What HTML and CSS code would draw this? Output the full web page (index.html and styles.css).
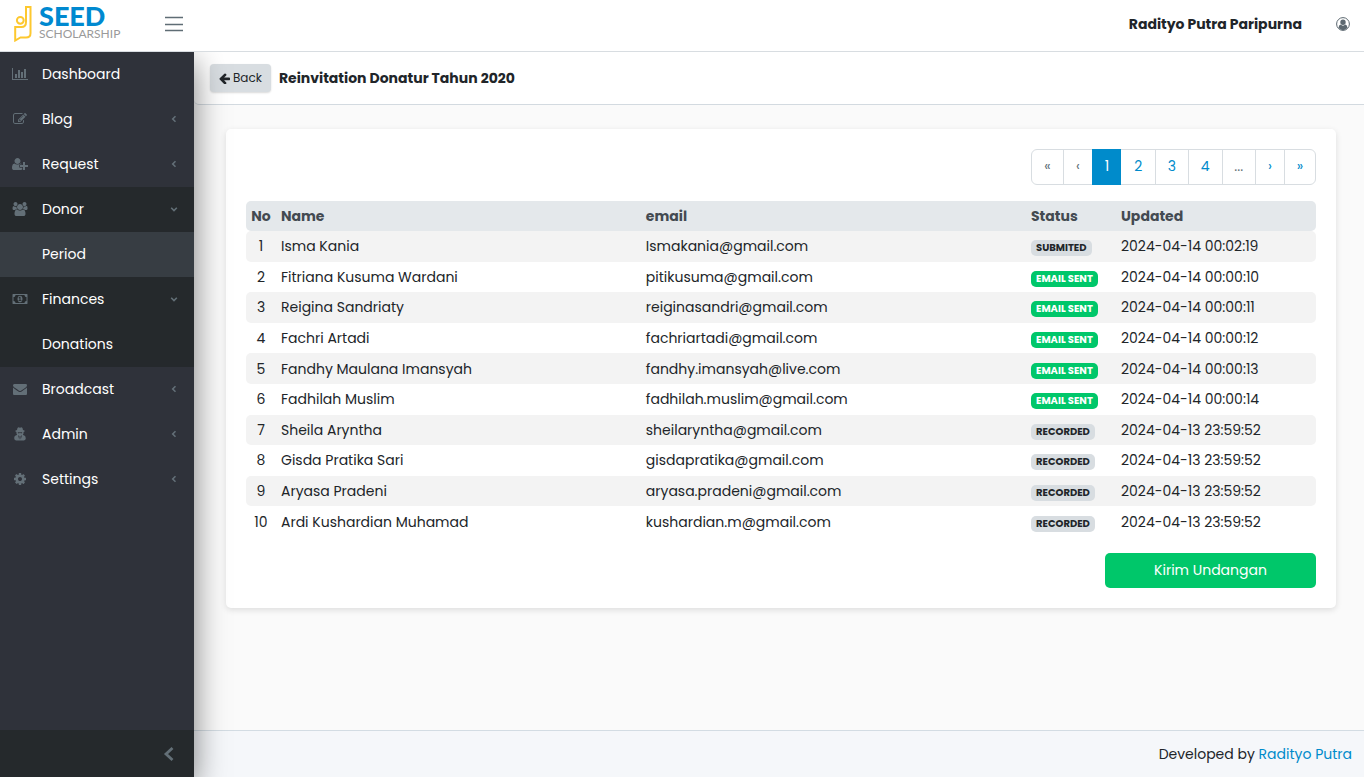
FILE: index.html
```html
<!DOCTYPE html>
<html lang="en">
<head>
<meta charset="utf-8">
<title>Reinvitation Donatur Tahun 2020</title>
<link rel="stylesheet" href="styles.css">
</head>
<body>
<header class="topbar">
  <a class="brand" href="#">
    <svg class="brand-mark" viewBox="0 0 18 36" aria-hidden="true"><path d="M12 1H16.500V27.200Q16.500 31.500 12 31.500H6.500L1.200 34.500V21H7.500Q12 21 12 16Z"/><circle cx="6.300" cy="14.300" r="3.400"/></svg>
    <span class="brand-text"><span class="brand-name">SEED</span><span class="brand-sub">SCHOLARSHIP</span></span>
  </a>
  <button class="menu-toggle" type="button" aria-label="Toggle menu"><svg viewBox="0 0 18 16"><path d="M0 1.500H18M0 8.500H18M0 14.500H18"/></svg></button>
  <strong class="user-name">Radityo Putra Paripurna</strong>
  <button class="user-button" type="button" aria-label="Account"><svg viewBox="0 0 14 14"><circle class="ring" cx="7" cy="7" r="6.400"/><path d="M7 2.600A2.700 2.700 0 0 1 7 8A2.700 2.700 0 0 1 7 2.600M4.600 7.500Q7 9.800 9.400 7.500Q11.200 8 11.500 10.800Q9.800 13.200 7 13.200T2.500 10.800Q2.800 8 4.600 7.500"/></svg></button>
</header>
<div class="shell">
  <aside class="sidebar">
    <nav class="nav">
      <a class="nav-item" href="#"><svg class="icon" viewBox="0 0 2048 1792"><path d="M640 896v512h-256v-512h256zm384-512v1024h-256v-1024h256zm1024 1152v128h-2048v-1536h128v1408h1920zm-640-896v768h-256v-768h256zm384-384v1152h-256v-1152h256z"/></svg><span>Dashboard</span></a>
      <a class="nav-item" href="#"><svg class="icon" viewBox="0 0 1792 1792"><path d="M888 1184l116-116-152-152-116 116v56h96v96h56zm440-720q-16-16-33 1l-350 350q-17 17-1 33t33-1l350-350q17-17 1-33zm80 594v190q0 119-84.5 203.5t-203.5 84.5h-832q-119 0-203.5-84.5t-84.5-203.5v-832q0-119 84.5-203.5t203.5-84.5h832q63 0 117 25 15 7 18 23 3 17-9 29l-49 49q-14 14-32 8-23-6-45-6h-832q-66 0-113 47t-47 113v832q0 66 47 113t113 47h832q66 0 113-47t47-113v-126q0-13 9-22l64-64q15-15 35-7t20 29zm-96-738l288 288-672 672h-288v-288zm444 132l-92 92-288-288 92-92q28-28 68-28t68 28l152 152q28 28 28 68t-28 68z"/></svg><span>Blog</span><svg class="caret" viewBox="0 0 8 8"><path d="M5.5 1.2L2.7 4L5.5 6.8"/></svg></a>
      <a class="nav-item" href="#"><svg class="icon" viewBox="0 0 2048 1792"><path d="M704 896q-159 0-271.5-112.5t-112.5-271.5 112.5-271.5 271.5-112.5 271.5 112.5 112.5 271.5-112.5 271.5-271.5 112.5zm960 128h352q13 0 22.5 9.5t9.5 22.5v192q0 13-9.5 22.5t-22.5 9.5h-352v352q0 13-9.5 22.5t-22.5 9.5h-192q-13 0-22.5-9.5t-9.5-22.5v-352h-352q-13 0-22.5-9.5t-9.5-22.5v-192q0-13 9.5-22.5t22.5-9.5h352v-352q0-13 9.5-22.5t22.5-9.5h192q13 0 22.5 9.5t9.5 22.5v352zm-736 224q0 52 38 90t90 38h256v238q-68 50-171 50h-874q-121 0-194-69t-73-190q0-53 3.5-103.5t14-109 26.5-108.5 43-97.5 62-81 85.5-53.5 111.5-20q19 0 39 17 79 61 154.5 91.5t164.5 30.5 164.5-30.5 154.5-91.5q20-17 39-17 132 0 217 96h-223q-52 0-90 38t-38 90v192z"/></svg><span>Request</span><svg class="caret" viewBox="0 0 8 8"><path d="M5.5 1.2L2.7 4L5.5 6.8"/></svg></a>
      <div class="nav-group">
        <a class="nav-item" href="#"><svg class="icon" viewBox="0 0 1920 1792"><path d="M593 896q-162 5-265 128h-134q-82 0-138-40.5t-56-118.5q0-353 124-353 6 0 43.5 21t97.5 42.5 119 21.5q67 0 133-23-5 37-5 66 0 159 93 293zm1071 637q0 120-73 189.5t-194 69.5h-874q-121 0-194-69.5t-73-189.5q0-53 3.5-103.5t14-109 26.5-108.5 43-97.5 62-81 85.5-53.5 111.5-20q10 0 43 21.5t73 48 107 48 135 21.5 135-21.5 107-48 73-48 43-21.5q61 0 111.5 20t85.5 53.5 62 81 43 97.5 26.5 108.5 14 109 3.5 103.5zm-1024-1277q0 106-75 181t-181 75-181-75-75-181 75-181 181-75 181 75 75 181zm704 384q0 159-112.5 271.5t-271.5 112.5-271.5-112.5-112.5-271.5 112.5-271.5 271.5-112.5 271.5 112.5 112.5 271.5zm576 225q0 78-56 118.5t-138 40.5h-134q-103-123-265-128 93-134 93-293 0-29-5-66 66 23 133 23 59 0 119-21.5t97.5-42.5 43.5-21q124 0 124 353zm-128-609q0 106-75 181t-181 75-181-75-75-181 75-181 181-75 181 75 75 181z"/></svg><span>Donor</span><svg class="caret" viewBox="0 0 8 8"><path d="M1.2 2.7L4 5.5L6.8 2.7"/></svg></a>
        <a class="nav-item nav-child current" href="#">Period</a>
        <a class="nav-item" href="#"><svg class="icon" viewBox="0 0 1920 1792"><path d="M768 1152h384v-96h-128v-448h-114l-148 137 77 80q42-37 55-57h2v288h-128v96zm512-256q0 70-21 142t-59.5 134-101.5 101-138 39-138-39-101.5-101-59.5-134-21-142 21-142 59.5-134 101.5-101 138-39 138 39 101.5 101 59.5 134 21 142zm512 256v-512q-106 0-181-75t-75-181h-1152q0 106-75 181t-181 75v512q106 0 181 75t75 181h1152q0-106 75-181t181-75zm128-832v1152q0 26-19 45t-45 19h-1792q-26 0-45-19t-19-45v-1152q0-26 19-45t45-19h1792q26 0 45 19t19 45z"/></svg><span>Finances</span><svg class="caret" viewBox="0 0 8 8"><path d="M1.2 2.7L4 5.5L6.8 2.7"/></svg></a>
        <a class="nav-item nav-child" href="#">Donations</a>
      </div>
      <a class="nav-item" href="#"><svg class="icon" viewBox="0 0 1792 1792"><path d="M1792 710v794q0 66-47 113t-113 47h-1472q-66 0-113-47t-47-113v-794q44 49 101 87 362 246 497 345 57 42 92.5 65.5t94.5 48 110 24.5h2q51 0 110-24.5t94.5-48 92.5-65.5q170-123 498-345 57-39 100-87zm0-294q0 79-49 151t-122 123q-376 261-468 325-10 7-42.5 31t-54 38.5-52 32.5-57.5 27-50 9h-2q-23 0-50-9t-57.5-27-52-32.5-54-38.5-42.5-31q-91-64-262-182.5t-205-142.5q-62-42-117-115.5t-55-136.5q0-78 41.5-130t118.5-52h1472q65 0 112.5 47t47.5 113z"/></svg><span>Broadcast</span><svg class="caret" viewBox="0 0 8 8"><path d="M5.5 1.2L2.7 4L5.5 6.8"/></svg></a>
      <a class="nav-item" href="#"><svg class="icon" viewBox="0 0 14 14"><path fill-rule="evenodd" d="M4 3Q4.300.3 5.400.3Q6.200.3 7 .8Q7.800.3 8.600.3Q9.700.3 10 3Q11.800 3.400 11.800 4T10.600 5Q10.800 6.500 10 7.500L10.200 8Q12.800 8.500 12.800 11.300Q12.800 13.400 11 13.400H3Q1.200 13.400 1.200 11.300Q1.200 8.500 3.800 8L4 7.500Q3.200 6.500 3.400 5Q2.200 4.600 2.200 4T4 3ZM4.700 5.300Q4.800 6.400 5.800 6.400T7 5.600Q7.200 6.400 8.200 6.400T9.300 5.300ZM5.100 8.300L6.200 12.600L6.600 9.800L6 8.700ZM8.900 8.300L7.800 12.600L7.400 9.800L8 8.700Z"/></svg><span>Admin</span><svg class="caret" viewBox="0 0 8 8"><path d="M5.5 1.2L2.7 4L5.5 6.8"/></svg></a>
      <a class="nav-item" href="#"><svg class="icon" viewBox="0 0 1792 1792"><path d="M1152 896q0-106-75-181t-181-75-181 75-75 181 75 181 181 75 181-75 75-181zm512-109v222q0 12-8 23t-20 13l-185 28q-19 54-39 91 35 50 107 138 10 12 10 25t-9 23q-27 37-99 108t-94 71q-12 0-26-9l-138-108q-44 23-91 38-16 136-29 186-7 28-36 28h-222q-14 0-24.5-8.5t-11.5-21.5l-28-184q-49-16-90-37l-141 107q-10 9-25 9-14 0-25-11-126-114-165-168-7-10-7-23 0-12 8-23 15-21 51-66.5t54-70.5q-27-50-41-99l-183-27q-13-2-21-12.5t-8-23.5v-222q0-12 8-23t19-13l186-28q14-46 39-92-40-57-107-138-10-12-10-24 0-10 9-23 26-36 98.5-107.5t94.5-71.5q13 0 26 10l138 107q44-23 91-38 16-136 29-186 7-28 36-28h222q14 0 24.5 8.5t11.5 21.5l28 184q49 16 90 37l142-107q9-9 24-9 13 0 25 10 129 119 165 170 7 8 7 22 0 12-8 23-15 21-51 66.5t-54 70.5q26 50 41 98l183 28q13 2 21 12.5t8 23.5z"/></svg><span>Settings</span><svg class="caret" viewBox="0 0 8 8"><path d="M5.5 1.2L2.7 4L5.5 6.8"/></svg></a>
    </nav>
    <button class="collapse" type="button" aria-label="Collapse sidebar"><svg viewBox="0 0 12 16"><path d="M9.5 2L3 8L9.500 14"/></svg></button>
  </aside>
  <div class="page">
    <div class="subheader">
      <a class="back" href="#"><svg viewBox="128 128 1536 1536"><path d="M1664 896v128q0 53-32.5 90.5t-84.5 37.5h-704l293 294q38 36 38 90t-38 90l-75 76q-37 37-90 37-52 0-91-37l-651-652q-37-37-37-90 0-52 37-91l651-650q38-38 91-38 52 0 90 38l75 74q38 38 38 91t-38 91l-293 293h704q52 0 84.5 37.5t32.5 90.5z"/></svg>Back</a>
      <h1 class="title">Reinvitation Donatur Tahun 2020</h1>
    </div>
    <main class="content">
      <section class="card">
        <nav class="pagination" aria-label="Pages">
          <span class="page-link edge muted">«</span><span class="page-link narrow muted">‹</span><a class="page-link narrow active" href="#">1</a><a class="page-link" href="#">2</a><a class="page-link" href="#">3</a><a class="page-link" href="#">4</a><span class="page-link muted">...</span><a class="page-link narrow" href="#">›</a><a class="page-link edge" href="#">»</a>
        </nav>
        <table class="table">
          <colgroup><col class="col-no"><col><col class="col-email"><col class="col-status"><col class="col-updated"></colgroup>
          <thead><tr><th>No</th><th>Name</th><th>email</th><th>Status</th><th>Updated</th></tr></thead>
          <tbody>
            <tr><td>1</td><td>Isma Kania</td><td>Ismakania@gmail.com</td><td><span class="badge">SUBMITED</span></td><td>2024-04-14 00:02:19</td></tr>
            <tr><td>2</td><td>Fitriana Kusuma Wardani</td><td>pitikusuma@gmail.com</td><td><span class="badge sent">EMAIL SENT</span></td><td>2024-04-14 00:00:10</td></tr>
            <tr><td>3</td><td>Reigina Sandriaty</td><td>reiginasandri@gmail.com</td><td><span class="badge sent">EMAIL SENT</span></td><td>2024-04-14 00:00:11</td></tr>
            <tr><td>4</td><td>Fachri Artadi</td><td>fachriartadi@gmail.com</td><td><span class="badge sent">EMAIL SENT</span></td><td>2024-04-14 00:00:12</td></tr>
            <tr><td>5</td><td>Fandhy Maulana Imansyah</td><td>fandhy.imansyah@live.com</td><td><span class="badge sent">EMAIL SENT</span></td><td>2024-04-14 00:00:13</td></tr>
            <tr><td>6</td><td>Fadhilah Muslim</td><td>fadhilah.muslim@gmail.com</td><td><span class="badge sent">EMAIL SENT</span></td><td>2024-04-14 00:00:14</td></tr>
            <tr><td>7</td><td>Sheila Aryntha</td><td>sheilaryntha@gmail.com</td><td><span class="badge">RECORDED</span></td><td>2024-04-13 23:59:52</td></tr>
            <tr><td>8</td><td>Gisda Pratika Sari</td><td>gisdapratika@gmail.com</td><td><span class="badge">RECORDED</span></td><td>2024-04-13 23:59:52</td></tr>
            <tr><td>9</td><td>Aryasa Pradeni</td><td>aryasa.pradeni@gmail.com</td><td><span class="badge">RECORDED</span></td><td>2024-04-13 23:59:52</td></tr>
            <tr><td>10</td><td>Ardi Kushardian Muhamad</td><td>kushardian.m@gmail.com</td><td><span class="badge">RECORDED</span></td><td>2024-04-13 23:59:52</td></tr>
          </tbody>
        </table>
        <button class="send" type="button">Kirim Undangan</button>
      </section>
    </main>
    <footer class="footer"><span>Developed by <a href="#">Radityo Putra</a></span></footer>
  </div>
</div>
</body>
</html>
```
FILE: styles.css
```css
* { box-sizing: border-box; }
body {
  margin: 0;
  min-height: 100vh;
  display: flex;
  flex-direction: column;
  font-family: Poppins, Inter, "Noto Sans", sans-serif;
  font-size: 14px;
  line-height: 20px;
  color: #212529;
  background: #fafafa;
}
a { color: #008bcb; text-decoration: none; }
button { font: inherit; border: 0; cursor: pointer; }
svg { display: block; }

.topbar {
  display: flex;
  align-items: center;
  height: 52px;
  padding: 0 14px 3px;
  background: #fff;
  border-bottom: 1px solid #d8dde1;
}
.brand { display: flex; align-items: flex-start; gap: 7px; width: 151px; }
.brand-mark { width: 18px; height: 36px; fill: none; stroke: #fdc82f; stroke-width: 2; }
.brand-text { display: flex; flex-direction: column; font-family: Lato, sans-serif; }
.brand-name { font-size: 27px; line-height: 20px; font-weight: 900; color: #0089d0; }
.brand-sub { font-size: 12px; line-height: 16px; font-weight: 400; color: #9a9a9a; }
.menu-toggle { padding: 0; background: none; }
.menu-toggle svg { width: 18px; height: 16px; stroke: #5f6d75; stroke-width: 1.4; }
.user-name { margin-left: auto; font-weight: 700; }
.user-button { margin-left: 34px; padding: 0; background: none; }
.user-button svg { width: 14px; height: 14px; fill: #5c6870; }
.user-button .ring { fill: none; stroke: #5c6870; }

.shell { display: flex; flex: 1; }
.sidebar {
  position: relative;
  display: flex;
  flex-direction: column;
  flex: 0 0 194px;
  background: #2f323a;
  box-shadow: 0 10px 30px rgba(0, 0, 0, 0.5);
  clip-path: inset(0 -40px 0 0);
}
.nav { flex: 1; }
.nav-item {
  display: flex;
  align-items: center;
  height: 45px;
  padding: 0 16px 2px 12px;
  color: #fff;
}
.nav-group { background: #25292c; }
.nav-child { padding-left: 42px; }
.current { background: #373d43; }
.icon { width: 16px; height: 14px; margin-right: 14px; fill: #636f77; }
.caret { width: 8px; height: 8px; margin-left: auto; fill: none; stroke: #636f77; stroke-width: 1.6; }
.collapse {
  display: flex;
  align-items: center;
  justify-content: flex-end;
  height: 47px;
  padding: 0 19px;
  background: #25292c;
}
.collapse svg { width: 12px; height: 16px; fill: none; stroke: #636f77; stroke-width: 2.8; }

.page { display: flex; flex-direction: column; flex: 1; min-width: 0; }
.subheader {
  display: flex;
  align-items: center;
  gap: 8px;
  height: 53px;
  padding: 0 16px;
  background: #fff;
  border-bottom: 1px solid #d3dae0;
  border-bottom-left-radius: 5px;
}
.back {
  display: flex;
  align-items: center;
  gap: 3px;
  height: 28px;
  padding: 0 9px;
  font-size: 12px;
  color: #212529;
  background: #d8dde1;
  border-radius: 4px;
  box-shadow: 0 1px 2px rgba(0, 0, 0, 0.15);
}
.back svg { width: 11px; height: 11px; fill: #212529; }
.title { margin: 0; font-size: 14px; line-height: 20px; font-weight: 700; }

.content { flex: 1; padding: 24px 28px 24px 32px; }
.card {
  display: flex;
  flex-direction: column;
  gap: 16px;
  padding: 20px;
  background: #fff;
  border-radius: 5px;
  box-shadow: 0 2px 6px rgba(0, 0, 0, 0.12);
}
.pagination {
  display: flex;
  align-self: flex-end;
  width: 285px;
  height: 36px;
  border: 1px solid #d8dde1;
  border-radius: 6px;
}
.page-link {
  display: flex;
  align-items: center;
  justify-content: center;
  flex: 1;
  padding-bottom: 2px;
  border-left: 1px solid #d8dde1;
}
.page-link:first-child { border-left: 0; }
.narrow { flex: 0 0 29px; }
.edge { flex: 0 0 31px; }
.muted { color: #636f77; }
.active { margin: -1px 0; background: #008bcb; border-color: #008bcb; color: #fff; }
.active + .page-link { border-left-color: #fff; }

.table { width: 100%; height: 336px; table-layout: fixed; border-spacing: 0; }
.col-no { width: 30px; }
.col-email { width: 36%; }
.col-status { width: 90px; }
.col-updated { width: 200px; }
.table th, .table td { padding: 0 5px; text-align: left; }
.table th { height: 30px; font-weight: 700; color: #434a51; background: #e4e8eb; white-space: nowrap; }
.table tr > :first-child { padding: 0; text-align: center; border-radius: 5px 0 0 5px; }
.table tr > :last-child { border-radius: 0 5px 5px 0; }
.table tbody tr:nth-child(odd) td { background: #f3f3f3; }
.badge {
  display: inline-block;
  padding: 0 5px;
  font-size: 10px;
  line-height: 16px;
  font-weight: 700;
  color: #212529;
  background: #d8dde1;
  border-radius: 5px;
  white-space: nowrap;
}
.sent { color: #fff; background: #00c76a; }
.send {
  align-self: flex-end;
  width: 211px;
  height: 35px;
  padding: 0 0 2px;
  color: #fff;
  background: #00c76a;
  border-radius: 5px;
}
.footer {
  display: flex;
  align-items: center;
  justify-content: flex-end;
  height: 47px;
  padding: 0 12px;
  background: #f5f7fa;
  border-top: 1px solid #d3dce3;
}
```
